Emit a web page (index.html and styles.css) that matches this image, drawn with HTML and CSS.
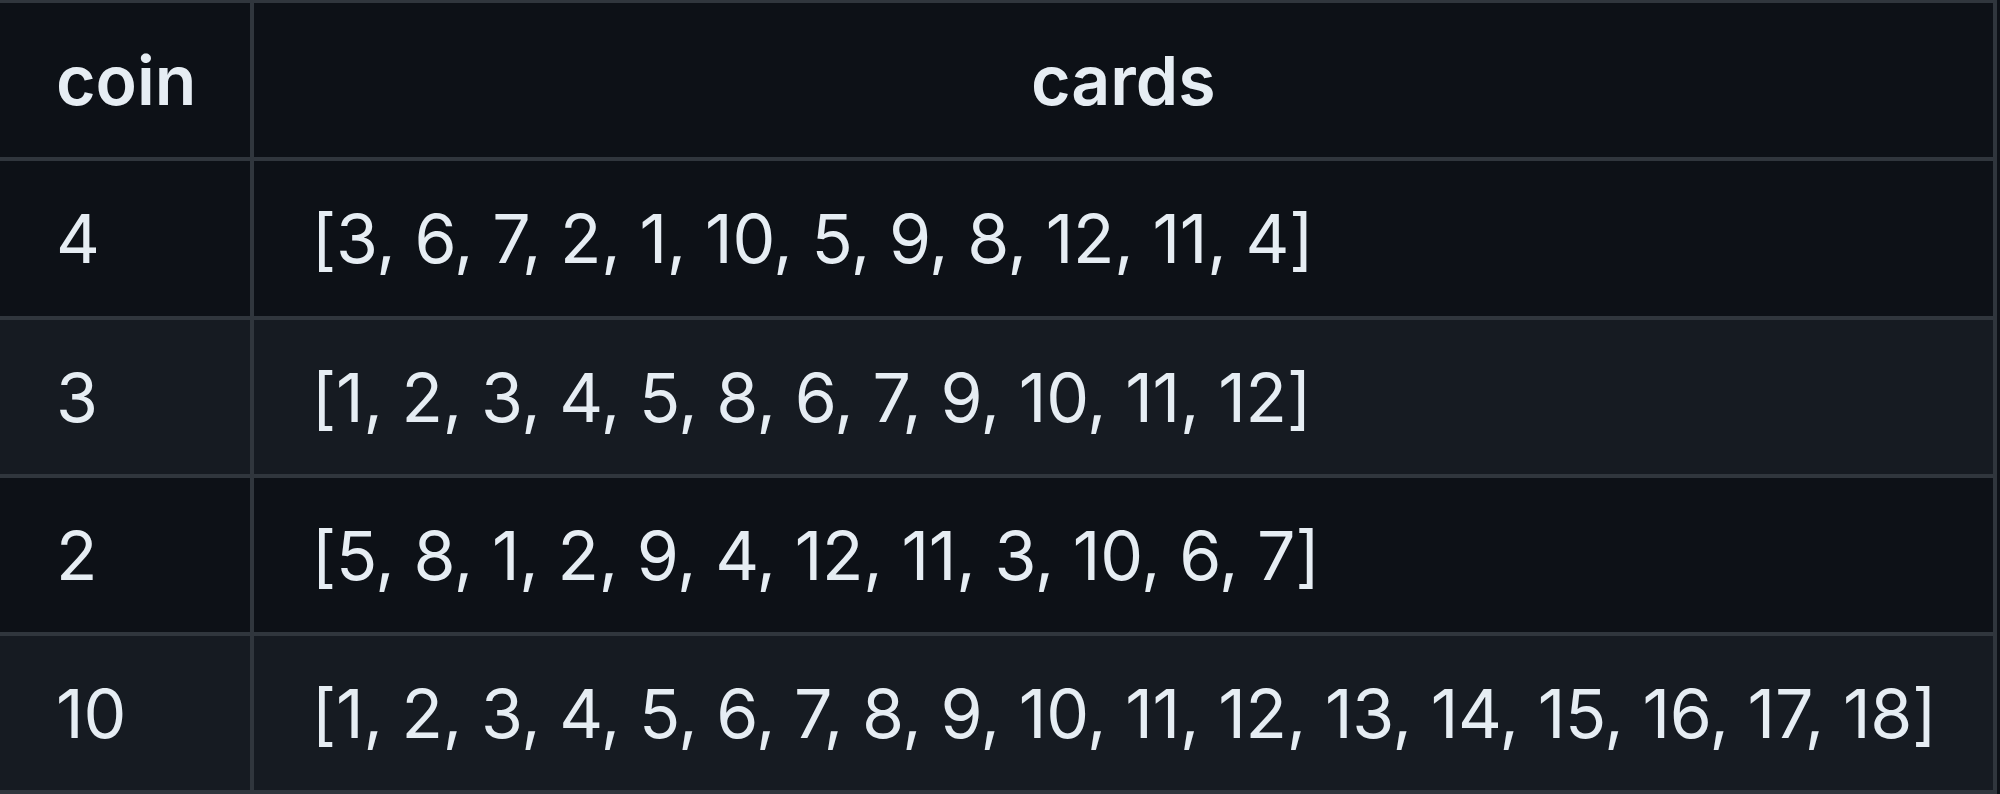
FILE: index.html
```html
<!DOCTYPE html>
<html lang="en">
<head>
<meta charset="utf-8">
<title>coin / cards</title>
<link rel="stylesheet" href="styles.css">
</head>
<body>
<table class="data-table">
  <thead>
    <tr>
      <th class="col-coin">coin</th>
      <th class="col-cards">cards</th>
    </tr>
  </thead>
  <tbody>
    <tr>
      <td class="col-coin">4</td>
      <td class="col-cards">[3, 6, 7, 2, 1, 10, 5, 9, 8, 12, 11, 4]</td>
    </tr>
    <tr>
      <td class="col-coin">3</td>
      <td class="col-cards">[1, 2, 3, 4, 5, 8, 6, 7, 9, 10, 11, 12]</td>
    </tr>
    <tr>
      <td class="col-coin">2</td>
      <td class="col-cards">[5, 8, 1, 2, 9, 4, 12, 11, 3, 10, 6, 7]</td>
    </tr>
    <tr>
      <td class="col-coin">10</td>
      <td class="col-cards">[1, 2, 3, 4, 5, 6, 7, 8, 9, 10, 11, 12, 13, 14, 15, 16, 17, 18]</td>
    </tr>
  </tbody>
</table>
</body>
</html>
```

FILE: styles.css
```css
html, body {
  margin: 0;
  padding: 0;
  background: #0d1117;
  overflow: hidden;
}

body {
  width: 2000px;
  height: 794px;
  font-family: Inter, "Noto Sans", "Liberation Sans", sans-serif;
  color: #e6edf3;
}

.data-table {
  border-collapse: separate;
  border-spacing: 0;
  table-layout: fixed;
  width: 2001px;
  margin: -1px 0 0 -4px;
  font-size: 68px;
  line-height: 102px;
}

.data-table th,
.data-table td {
  border-right: 4px solid #30363d;
  border-bottom: 4px solid #30363d;
  padding: 26px 0 26.3px;
  text-align: left;
  white-space: nowrap;
  box-sizing: content-box;
}

.data-table td {
  letter-spacing: -0.27px;
}

.data-table thead th {
  border-top: 4px solid #30363d;
  font-weight: 600;
}

.data-table .col-coin {
  border-left: 4px solid #30363d;
  width: 193.5px;
  padding-left: 56px;
}

.data-table .col-cards {
  padding-left: 58px;
}

.data-table th.col-cards {
  text-align: center;
  padding-left: 0;
}

.data-table tbody tr {
  background: #0d1117;
}

.data-table tbody tr:nth-child(even) {
  background: #161b22;
}
```
